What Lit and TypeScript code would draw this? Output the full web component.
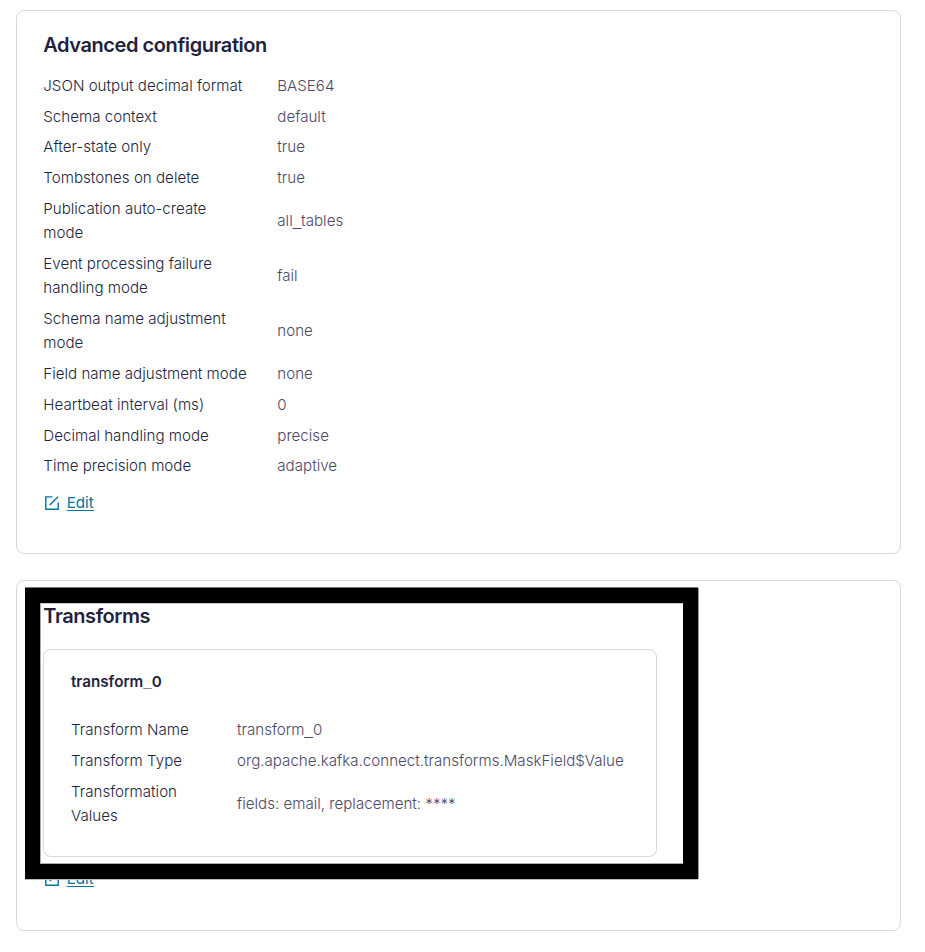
import { LitElement, html, css, svg } from "lit";
import { customElement, property } from "lit/decorators.js";

type Row = [label: string, value: string];

const ADVANCED: Row[] = [
  ["JSON output decimal format", "BASE64"],
  ["Schema context", "default"],
  ["After-state only", "true"],
  ["Tombstones on delete", "true"],
  ["Publication auto-create mode", "all_tables"],
  ["Event processing failure handling mode", "fail"],
  ["Schema name adjustment mode", "none"],
  ["Field name adjustment mode", "none"],
  ["Heartbeat interval (ms)", "0"],
  ["Decimal handling mode", "precise"],
  ["Time precision mode", "adaptive"],
];

const TRANSFORM: Row[] = [
  ["Transform Name", "transform_0"],
  ["Transform Type", "org.apache.kafka.connect.transforms.MaskField$Value"],
  ["Transformation Values", "fields: email, replacement: ****"],
];

// Identifiers get a wider underscore than Inter's own.
const wideUnderscore = css`
  .underscore {
    font-family: "Liberation Sans", sans-serif;
    line-height: 1;
  }
`;

const identifier = (text: string) =>
  text.split("_").map((part, i) => (i === 0 ? part : html`<span class="underscore">_</span>${part}`));

@customElement("detail-list")
export class DetailList extends LitElement {
  @property({ attribute: false }) rows: Row[] = [];

  static styles = [
    wideUnderscore,
    css`
      :host {
        display: block;
      }
      .list {
        display: grid;
        grid-template-columns: var(--label-width, 234px) 1fr;
        row-gap: 6.4px;
        align-items: center;
        margin: 0;
        font-weight: 300;
        line-height: 24.35px;
      }
      .label {
        padding-right: 30px;
        color: #231f40;
      }
      .value {
        margin: 0;
        color: #4c4869;
        white-space: nowrap;
      }
    `,
  ];

  render() {
    return html`<dl class="list">
      ${this.rows.map(
        ([label, value]) => html`<dt class="label">${label}</dt>
          <dd class="value">${identifier(value)}</dd>`
      )}
    </dl>`;
  }
}

@customElement("edit-link")
export class EditLink extends LitElement {
  static styles = css`
    :host {
      display: flex;
      align-items: center;
      gap: 7px;
      padding-left: 0.4px;
      line-height: 24px;
      color: #0074a2;
    }
    .icon {
      display: block;
      width: 16px;
      height: 16px;
    }
    .link {
      color: inherit;
      text-decoration: underline;
      text-decoration-thickness: 1px;
      text-underline-offset: 2px;
    }
  `;

  render() {
    return html`
      <svg class="icon" viewBox="0 0 16 16" fill="none" stroke="currentColor" stroke-width="1.4">
        ${svg`<path d="M8.4 1.9H1.8V14.3H14.2V7.6" /><path d="M5.8 10.1L14.1 1.8" />`}
      </svg>
      <a class="link" href="#">Edit</a>
    `;
  }
}

@customElement("app-root")
export class AppRoot extends LitElement {
  static styles = [
    wideUnderscore,
    css`
      :host {
        display: block;
        box-sizing: border-box;
        height: 952px;
        padding: 10px 24px 0 16px;
        overflow: hidden;
        background: #fff;
        color: #231f40;
        font-family: Inter, "Liberation Sans", sans-serif;
        font-size: 15.13px;
      }
      .card {
        position: relative;
        box-sizing: border-box;
        border: 1px solid #d8d7e3;
        border-radius: 8px;
        padding: 20px 26.3px 0;
      }
      .advanced {
        height: 544px;
        margin-bottom: 26px;
      }
      .transforms {
        height: 351px;
        padding-top: 21px;
      }
      .title {
        margin: 0;
        font-size: 20px;
        font-weight: 600;
        line-height: 29px;
        letter-spacing: -0.43px;
      }
      .advanced .rows {
        margin-top: 14px;
      }
      .advanced .edit {
        margin-top: 12px;
      }
      .transform {
        box-sizing: border-box;
        width: 614px;
        height: 208px;
        margin-top: 18px;
        padding: 20px 26.7px 0;
        border: 1px solid #d8d7e3;
        border-radius: 8px;
        --label-width: 166px;
      }
      .name {
        margin: 0 0 24.2px;
        font-size: 15.2px;
        font-weight: 600;
        line-height: 24px;
      }
      .transforms .edit {
        margin-top: 10px;
      }
      .highlight {
        position: absolute;
        top: 7px;
        left: 8px;
        box-sizing: border-box;
        width: 673px;
        height: 291px;
        border: 15px solid #000;
        box-shadow: 1px 0 #999, 0 -1px #777, 0 1px #bbb,
          inset 1px 0 #aaa, inset 0 1px #ccc, inset 0 -1px #aaa;
        pointer-events: none;
      }
    `,
  ];

  render() {
    return html`
      <section class="card advanced">
        <h2 class="title">Advanced configuration</h2>
        <detail-list class="rows" .rows=${ADVANCED}></detail-list>
        <edit-link class="edit"></edit-link>
      </section>
      <section class="card transforms">
        <h2 class="title">Transforms</h2>
        <div class="transform">
          <h3 class="name">${identifier("transform_0")}</h3>
          <detail-list .rows=${TRANSFORM}></detail-list>
        </div>
        <edit-link class="edit"></edit-link>
        <div class="highlight"></div>
      </section>
    `;
  }
}
